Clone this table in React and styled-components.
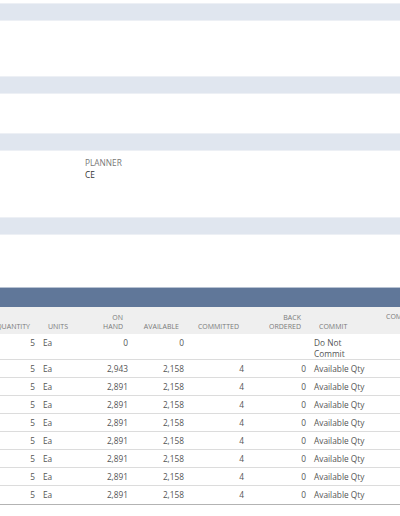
import React, { useLayoutEffect, useRef } from "react";
import styled, { createGlobalStyle } from "styled-components";

const Global = createGlobalStyle`
  html, body { margin: 0; padding: 0; background: #ffffff; overflow: hidden; }
  body { font-family: "Open Sans", "Liberation Sans", sans-serif; }
  * { box-sizing: border-box; }
`;

const Page = styled.div`
  width: 400px;
  padding-top: 3px;
  display: flex;
  flex-direction: column;
`;

const Band = styled.div`
  height: 18px;
  background: #e0e6ef;
  border-top: 1px solid #edf0f5;
  border-bottom: 1px solid #edf0f5;
`;

const SectionBody = styled.div`
  height: ${(p) => p.$h}px;
  padding-top: ${(p) => p.$pt || 0}px;
`;

const FieldGrid = styled.div`
  display: grid;
  grid-template-columns: 85px 160px 1fr;
`;

const Field = styled.div`
  grid-column: 2;
  display: flex;
  flex-direction: column;
  font-size: 8.3px;
  line-height: 12px;
`;

const FieldLabel = styled.span`
  color: #777777;
  text-transform: uppercase;
`;

const FieldValue = styled.span`
  color: #333333;
`;

const SublistBar = styled.div`
  height: 20px;
  background: #607799;
  border-top: 1px solid #b7c2d2;
`;

const Scroller = styled.div`
  overflow-x: auto;
  overflow-y: hidden;
  scrollbar-width: none;
  &::-webkit-scrollbar { display: none; }
`;

const Table = styled.div`
  width: 501px;
  display: flex;
  flex-direction: column;
  border-bottom: 1px solid #b3b3b3;
  box-shadow: 0 1px 0 #e4e4e4;
`;

const cols = "70px 41px 52px 56px 60px 62px 67px 93px";

const HeadRow = styled.div`
  display: grid;
  grid-template-columns: ${cols};
  height: 27px;
  background: #efefef;
`;

const HeadCell = styled.div`
  display: flex;
  flex-direction: column;
  justify-content: ${(p) => (p.$top ? "flex-start" : "flex-end")};
  align-items: ${(p) => (p.$right ? "flex-end" : "flex-start")};
  text-align: ${(p) => (p.$right ? "right" : "left")};
  padding: ${(p) => (p.$top ? "5px 9px 0" : "0 9px 3.5px")};
  font-size: 7px;
  line-height: 9px;
  color: #7a7a7a;
  text-transform: uppercase;
  white-space: nowrap;
  overflow: hidden;
`;

const Row = styled.div`
  display: grid;
  grid-template-columns: ${cols};
  min-height: 18px;
  border-bottom: ${(p) => (p.$last ? "none" : "1px solid #dcdcdc")};
`;

const Cell = styled.div`
  padding: 3px 4px 0;
  font-size: 8.3px;
  line-height: 11px;
  color: #555555;
  text-align: ${(p) => (p.$right ? "right" : "left")};
  white-space: ${(p) => (p.$wrap ? "normal" : "nowrap")};
`;

const rows = [
  { q: "5", u: "Ea", oh: "0", av: "0", cm: "", bo: "", commit: "Do Not Commit", wrap: true },
  { q: "5", u: "Ea", oh: "2,943", av: "2,158", cm: "4", bo: "0", commit: "Available Qty" },
  ...Array.from({ length: 7 }, () => ({
    q: "5", u: "Ea", oh: "2,891", av: "2,158", cm: "4", bo: "0", commit: "Available Qty",
  })),
];

export default function App() {
  const ref = useRef(null);
  useLayoutEffect(() => {
    if (ref.current) ref.current.scrollLeft = 31;
  }, []);
  return (
    <>
      <Global />
      <Page>
        <Band />
        <SectionBody $h={55} />
        <Band />
        <SectionBody $h={39} />
        <Band />
        <SectionBody $h={66} $pt={6}>
          <FieldGrid>
            <Field>
              <FieldLabel>Planner</FieldLabel>
              <FieldValue>CE</FieldValue>
            </Field>
          </FieldGrid>
        </SectionBody>
        <Band />
        <SectionBody $h={52} />
        <SublistBar />
        <Scroller ref={ref}>
          <Table>
            <HeadRow>
              <HeadCell $right>Quantity</HeadCell>
              <HeadCell>Units</HeadCell>
              <HeadCell $right>
                <span>On</span>
                <span>Hand</span>
              </HeadCell>
              <HeadCell $right>Available</HeadCell>
              <HeadCell $right>Committed</HeadCell>
              <HeadCell $right>
                <span>Back</span>
                <span>Ordered</span>
              </HeadCell>
              <HeadCell>Commit</HeadCell>
              <HeadCell $top>Commitment</HeadCell>
            </HeadRow>
            {rows.map((r, i) => (
              <Row key={i} $last={i === rows.length - 1}>
                <Cell $right>{r.q}</Cell>
                <Cell>{r.u}</Cell>
                <Cell $right>{r.oh}</Cell>
                <Cell $right>{r.av}</Cell>
                <Cell $right>{r.cm}</Cell>
                <Cell $right>{r.bo}</Cell>
                <Cell $wrap={r.wrap}>
                  {r.wrap ? (
                    <>
                      Do Not
                      <br />
                      Commit
                    </>
                  ) : (
                    r.commit
                  )}
                </Cell>
                <Cell />
              </Row>
            ))}
          </Table>
        </Scroller>
      </Page>
    </>
  );
}
